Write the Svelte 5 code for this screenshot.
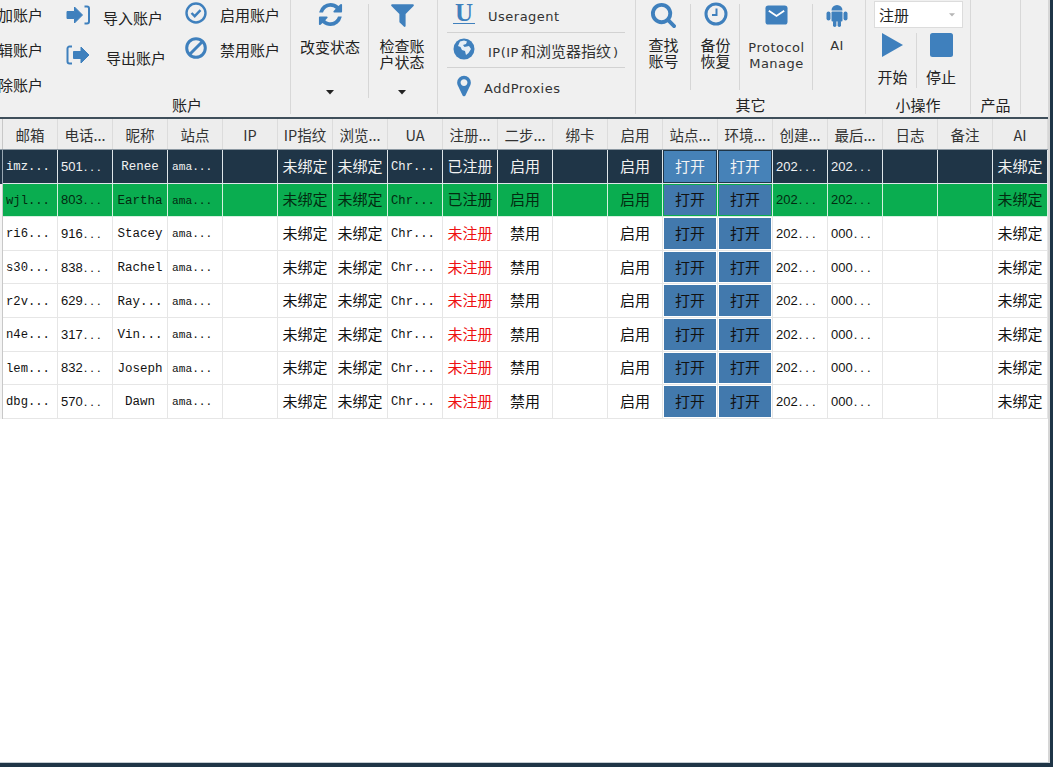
<script>
  const fa = {
    refresh: "M1639 1056q0 5-1 7-64 268-268 434.500t-478 166.500q-146 0-282.500-55t-243.500-157l-129 129q-19 19-45 19t-45-19-19-45v-448q0-26 19-45t45-19h448q26 0 45 19t19 45-19 45l-137 137q71 66 161 102t187 36q134 0 250-65t186-179q11-17 53-117 8-23 30-23h192q13 0 22.500 9.500t9.500 22.500zm25-800v448q0 26-19 45t-45 19h-448q-26 0-45-19t-19-45 19-45l138-138q-148-137-349-137-134 0-250 65t-186 179q-11 17-53 117-8 23-30 23h-199q-13 0-22.500-9.500t-9.500-22.500v-7q65-268 270-434.500t480-166.500q146 0 284 55.500t245 156.500l130-129q19-19 45-19t45 19 19 45z",
    filter: "M1595 295q17 41-14 70l-493 493v742q0 42-39 59-13 5-25 5-27 0-45-19l-256-256q-19-19-19-45v-486l-493-493q-31-29-14-70 17-39 59-39h1280q42 0 59 39z",
    search: "M1216 832q0-185-131.500-316.500t-316.500-131.500-316.500 131.500-131.500 316.500 131.500 316.500 316.500 131.500 316.500-131.500 131.500-316.500zm512 832q0 52-38 90t-90 38q-54 0-90-38l-343-342q-179 124-399 124-143 0-273.500-55.500t-225-150-150-225-55.500-273.500 55.500-273.500 150-225 225-150 273.500-55.500 273.500 55.500 225 150 150 225 55.500 273.500q0 220-124 399l343 343q37 37 37 90z",
    marker: "M1152 640q0-106-75-181t-181-75-181 75-75 181 75 181 181 75 181-75 75-181zm256 0q0 109-33 179l-364 774q-16 33-47.500 52t-67.500 19-67.500-19-46.500-52l-365-774q-33-70-33-179 0-212 150-362t362-150 362 150 150 362z"
  };

  const headers = ["邮箱","电话...","昵称","站点","IP","IP指纹","浏览...","UA","注册...","二步...","绑卡","启用","站点...","环境...","创建...","最后...","日志","备注","AI"];

  const rows = [
    { kind: "dark", email: "imz", phone: "501", name: "Renee", reg: "已注册", two: "启用", last: "202" },
    { kind: "green", email: "wjl", phone: "803", name: "Eartha", reg: "已注册", two: "启用", last: "202" },
    { kind: "", email: "ri6", phone: "916", name: "Stacey", reg: "未注册", two: "禁用", last: "000" },
    { kind: "", email: "s30", phone: "838", name: "Rachel", reg: "未注册", two: "禁用", last: "000" },
    { kind: "", email: "r2v", phone: "629", name: "Ray...", reg: "未注册", two: "禁用", last: "000" },
    { kind: "", email: "n4e", phone: "317", name: "Vin...", reg: "未注册", two: "禁用", last: "000" },
    { kind: "", email: "lem", phone: "832", name: "Joseph", reg: "未注册", two: "禁用", last: "000" },
    { kind: "", email: "dbg", phone: "570", name: "Dawn", reg: "未注册", two: "禁用", last: "000" }
  ];
</script>

{#snippet icon(name, cls)}
  <svg class={cls} viewBox="0 0 1792 1792" aria-hidden="true"><path d={fa[name]} /></svg>
{/snippet}

{#snippet caret()}
  <svg class="caret" viewBox="0 0 8 5" aria-hidden="true"><path d="M0 0h8L4 4.500z" /></svg>
{/snippet}

{#snippet num(text)}
  <span class="numtext">{text}<span class="dots">...</span></span>
{/snippet}

<div class="window">
  <div class="inner">
    <div class="toolbar">
      <section class="group acct">
        <div class="gbody acct-body">
          <div class="col1">
            <div class="cut"><span>添加账户</span></div>
            <div class="cut"><span>编辑账户</span></div>
            <div class="cut"><span>删除账户</span></div>
          </div>
          <div class="col2">
            <div class="io">
              <svg class="ioicon" viewBox="0 0 24 20" aria-hidden="true">
                <path class="fill round" d="M1 6.500h7.500V2l8 8-8 8v-4.500H1z" />
                <path class="line med" d="M18.500 1.500h2.500a2 2 0 0 1 2 2v13a2 2 0 0 1-2 2h-2.500" />
              </svg>
              <span class="io-in">导入账户</span>
            </div>
            <div class="io">
              <svg class="ioicon" viewBox="0 0 24 20" aria-hidden="true">
                <path class="line med" d="M6 1.500H3.500a2 2 0 0 0-2 2v13a2 2 0 0 0 2 2H6" />
                <path class="fill round" d="M7.500 6.500h7.500V2l8 8-8 8v-4.500H7.500z" />
              </svg>
              <span class="io-out">导出账户</span>
            </div>
          </div>
          <div class="col3">
            <div class="st">
              <svg class="sticon" viewBox="0 0 22 22" aria-hidden="true">
                <circle class="line thick" cx="11" cy="11" r="9.500" />
                <path class="line thick" d="M6.500 11l3.200 3.200 5.800-6" />
              </svg>
              <span>启用账户</span>
            </div>
            <div class="st">
              <svg class="sticon" viewBox="0 0 22 22" aria-hidden="true">
                <circle class="line bold" cx="11" cy="11" r="9.300" />
                <path class="line bold" d="M5 17L17 5" />
              </svg>
              <span>禁用账户</span>
            </div>
          </div>
        </div>
        <div class="glabel acct-label">账户</div>
      </section>

      <section class="group state">
        <div class="gbody tools">
          <div class="tool t78 sep">
            <div class="ticon">{@render icon("refresh", "fa i27")}</div>
            <div class="tlabel">改变状态</div>
            {@render caret()}
          </div>
          <div class="tool t68">
            <div class="ticon">{@render icon("filter", "fa i29")}</div>
            <div class="tlabel narrow">检查账<br />户状态</div>
            {@render caret()}
          </div>
        </div>
      </section>

      <section class="group net">
        <div class="netrow r1">
          <span class="slot s40"><span class="ulogo">U</span></span>
          <span class="latin">Useragent</span>
        </div>
        <div class="netrow r2">
          <span class="slot s40">
            <svg class="globe" viewBox="0 0 22 22" aria-hidden="true">
              <circle class="fill" cx="11" cy="11" r="10.500" />
              <path class="land" d="M7 3.500l4-1 3 1-1 2.500-3 1 1.500 2 4.500-1 2 3-2.500 4-2.500 2-1-4-3-1-1.500-3-2.500-1z" />
            </svg>
          </span>
          <span class="latin">IP(IP<span class="zh">和浏览器指纹</span>)</span>
        </div>
        <div class="netrow r3">
          <span class="slot s36">{@render icon("marker", "fa i24 pin")}</span>
          <span class="latin">AddProxies</span>
        </div>
      </section>

      <section class="group misc">
        <div class="gbody tools">
          <div class="tool t55 sep short">
            <div class="ticon">{@render icon("search", "fa i26")}</div>
            <div class="tlabel narrow tight">查找<br />账号</div>
          </div>
          <div class="tool t49 sep short">
            <div class="ticon">
              <svg class="clock" viewBox="0 0 24 24" aria-hidden="true">
                <circle class="line bold" cx="12" cy="12" r="10" />
                <path class="line med" d="M12.500 6.500V13H8" />
              </svg>
            </div>
            <div class="tlabel narrow tight">备份<br />恢复</div>
          </div>
          <div class="tool t73 sep short">
            <div class="ticon">
              <svg class="mail" viewBox="0 0 24 20" aria-hidden="true">
                <rect class="fill" x="0.500" y="0" width="23" height="20" rx="3" />
                <path class="mailflap" d="M4 5.500l8 5.500 8-5.500" />
              </svg>
            </div>
            <div class="tlabel latin proto">Protocol<br />Manage</div>
          </div>
          <div class="tool t48">
            <div class="ticon">
              <svg class="android" viewBox="0 0 22 24" aria-hidden="true">
                <path class="fill" d="M5.500 7.500a5.500 5.500 0 0 1 11 0z" />
                <rect class="fill" x="5.500" y="8.500" width="11" height="10" rx="1" />
                <rect class="fill" x="0.500" y="8.500" width="4" height="9" rx="2" />
                <rect class="fill" x="17.500" y="8.500" width="4" height="9" rx="2" />
                <rect class="fill" x="7" y="17" width="3.400" height="7" rx="1.700" />
                <rect class="fill" x="11.600" y="17" width="3.400" height="7" rx="1.700" />
              </svg>
            </div>
            <div class="tlabel latin ai">AI</div>
          </div>
        </div>
        <div class="glabel">其它</div>
      </section>

      <section class="group run">
        <div class="gbody">
          <div class="select"><span>注册</span><svg class="selcaret" viewBox="0 0 8 5" aria-hidden="true"><path d="M0 0h8L4 4.500z" /></svg></div>
          <div class="runrow">
            <div class="runcol sep2">
              <svg class="runicon" viewBox="0 0 24 24" aria-hidden="true"><path class="fill" d="M1 0l21 12L1 24z" /></svg>
              <span>开始</span>
            </div>
            <div class="runcol">
              <svg class="runicon" viewBox="0 0 24 24" aria-hidden="true"><rect class="fill" x="1" y="0" width="23" height="24" rx="2.500" /></svg>
              <span>停止</span>
            </div>
          </div>
        </div>
        <div class="glabel">小操作</div>
      </section>

      <section class="group prod">
        <div class="gbody"></div>
        <div class="glabel">产品</div>
      </section>
    </div>

    <div class="table">
      <div class="row head">
        <div class="gut"></div>
        {#each headers as h}
          <div class="hcell">{h}</div>
        {/each}
      </div>
      {#each rows as r}
        <div class="row {r.kind}">
          <div class="gut"></div>
          <div class="cell mono left">{r.email}...</div>
          <div class="cell left">{@render num(r.phone)}</div>
          <div class="cell mono center">{r.name}</div>
          <div class="cell mono left site">ama...</div>
          <div class="cell"></div>
          <div class="cell center cjk">未绑定</div>
          <div class="cell center cjk">未绑定</div>
          <div class="cell mono left">Chr...</div>
          <div class="cell center cjk" class:red={r.reg === "未注册"}>{r.reg}</div>
          <div class="cell center cjk">{r.two}</div>
          <div class="cell"></div>
          <div class="cell center cjk">启用</div>
          <div class="cell btncell"><button class="open">打开</button></div>
          <div class="cell btncell"><button class="open">打开</button></div>
          <div class="cell left">{@render num("202")}</div>
          <div class="cell left">{@render num(r.last)}</div>
          <div class="cell"></div>
          <div class="cell"></div>
          <div class="cell center cjk">未绑定</div>
        </div>
      {/each}
    </div>
  </div>
</div>

<style>
  :global(body) {
    margin: 0;
    background: #1f3547;
  }

  .window {
    width: 1053px;
    height: 767px;
    box-sizing: border-box;
    padding: 0 3px 4px 0;
    background: #1f3547;
    font-family: "Noto Sans CJK SC", "Liberation Sans", sans-serif;
    color: #222;
    font-size: 15px;
    overflow: hidden;
  }

  .inner {
    height: 100%;
    box-sizing: border-box;
    background: #fff;
    border-right: 2px solid #d6d6d6;
    border-bottom: 1px solid #c4ccd2;
    display: flex;
    flex-direction: column;
  }

  .toolbar {
    height: 117px;
    flex: none;
    display: flex;
    background: #f0f0f0;
    border-bottom: 2px solid #3f4f5b;
    overflow: hidden;
  }

  .group {
    flex: none;
    display: flex;
    flex-direction: column;
    box-sizing: border-box;
    height: 114px;
    border-right: 1px solid #d8d8d8;
  }

  .gbody {
    height: 98px;
    flex: none;
  }

  .glabel {
    text-align: center;
    line-height: 14px;
    font-size: 15px;
  }

  .acct-label {
    padding-left: 84px;
  }

  .fill,
  .fa {
    fill: #3f80bd;
  }

  .round {
    stroke: #3f80bd;
    stroke-width: 1;
    stroke-linejoin: round;
  }

  .line {
    fill: none;
    stroke: #3f80bd;
    stroke-width: 1.600;
  }

  .med {
    stroke-width: 2;
  }

  .thick {
    stroke-width: 2.400;
  }

  .bold {
    stroke-width: 3;
  }

  .acct {
    width: 291px;
  }

  .acct-body {
    display: flex;
  }

  .col1 {
    width: 43px;
    margin-right: 23px;
    margin-top: -3px;
  }

  .cut {
    height: 35px;
    display: flex;
    justify-content: flex-end;
    align-items: center;
    overflow: hidden;
    white-space: nowrap;
  }

  .cut span {
    flex: none;
  }

  .col2 {
    width: 119px;
    margin-top: -5px;
  }

  .io {
    height: 40px;
    display: flex;
    align-items: center;
    white-space: nowrap;
  }

  .ioicon {
    width: 24px;
    height: 20px;
    flex: none;
  }

  .io-in {
    margin: 4px 0 0 13px;
  }

  .io-out {
    margin: 4px 0 0 16px;
  }

  .col3 {
    margin-top: -3px;
  }

  .st {
    height: 35px;
    display: flex;
    align-items: center;
    white-space: nowrap;
  }

  .sticon {
    width: 22px;
    height: 22px;
    flex: none;
    margin-right: 13px;
    margin-top: -3px;
  }

  .state {
    width: 147px;
  }

  .tools {
    display: flex;
  }

  .tool {
    position: relative;
    box-sizing: border-box;
    height: 98px;
    flex: none;
    display: flex;
    flex-direction: column;
    align-items: center;
  }

  .sep::after {
    content: "";
    position: absolute;
    right: 0;
    top: 4px;
    bottom: 0;
    width: 1px;
    background: #d6d6d6;
  }

  .short {
    height: 90px;
  }

  .t78 { width: 78px; }
  .t68 { width: 68px; padding-right: 2px; }
  .t55 { width: 55px; }
  .t49 { width: 49px; }
  .t73 { width: 73px; }
  .t48 { width: 48px; }

  .ticon {
    height: 28px;
    display: flex;
    align-items: center;
    justify-content: center;
    flex: none;
  }

  .i27 { width: 27px; height: 27px; }
  .i29 { width: 29px; height: 29px; }
  .i26 { width: 27px; height: 27px; }
  .i24 { width: 24px; height: 24px; }

  .pin {
    margin: -5px 0 0 -1px;
  }

  .tlabel {
    margin-top: 10px;
    line-height: 17px;
    font-size: 15px;
    text-align: center;
    white-space: nowrap;
  }

  .narrow {
    line-height: 16px;
  }

  .tight {
    margin-top: 9px;
  }

  .caret {
    width: 8px;
    height: 5px;
    fill: #222;
    margin-top: auto;
    margin-bottom: 3px;
  }

  .clock {
    width: 24px;
    height: 24px;
  }

  .mail {
    width: 23px;
    height: 20px;
    margin-top: 1px;
  }

  .mailflap {
    fill: none;
    stroke: #fff;
    stroke-width: 2;
  }

  .android {
    width: 22px;
    height: 24px;
    margin-top: 2px;
  }

  .latin {
    font-family: "DejaVu Sans", "Noto Sans CJK SC", sans-serif;
    font-size: 13px;
    letter-spacing: 0.5px;
    color: #333;
    white-space: nowrap;
  }

  .zh {
    font-family: "Noto Sans CJK SC", sans-serif;
    font-size: 15px;
    letter-spacing: 0;
    margin: 0 2px;
  }

  .proto {
    line-height: 16px;
    margin-top: 12px;
  }

  .ai {
    margin-top: 9px;
    font-size: 13px;
  }

  .net {
    width: 198px;
    padding: 0 10px 0 9px;
  }

  .netrow {
    display: flex;
    align-items: center;
  }

  .r1 {
    height: 32px;
    border-bottom: 1px solid #d2d2d2;
  }

  .r2 {
    height: 34px;
    border-bottom: 1px solid #d2d2d2;
  }

  .r3 {
    height: 38px;
    padding-top: 1px;
  }

  .slot {
    display: flex;
    justify-content: flex-start;
    align-items: center;
    flex: none;
  }

  .s40 { width: 41px; padding-left: 6px; box-sizing: border-box; }
  .s36 { width: 37px; padding-left: 6px; box-sizing: border-box; }

  .ulogo {
    display: block;
    width: 22px;
    text-align: center;
    font-family: "Liberation Serif", serif;
    font-weight: 700;
    font-size: 25px;
    line-height: 21px;
    color: #3f80bd;
    border-bottom: 1px solid #3f80bd;
    margin-top: -6px;
  }

  .globe {
    width: 22px;
    height: 22px;
    margin-top: -2px;
  }

  .land {
    fill: #e6eef5;
  }

  .misc {
    width: 230px;
  }

  .run {
    width: 105px;
  }

  .select {
    box-sizing: border-box;
    width: 89px;
    height: 27px;
    margin: 1px 0 0 8px;
    background: #fff;
    border: 1px solid #dcdcdc;
    display: flex;
    align-items: center;
    justify-content: space-between;
    padding: 0 7px 0 4px;
    font-size: 15px;
  }

  .selcaret {
    width: 6px;
    height: 4px;
    fill: #b5b5b5;
  }

  .runrow {
    display: flex;
    margin: 5px 0 0 3px;
  }

  .runcol {
    box-sizing: border-box;
    width: 48px;
    height: 55px;
    display: flex;
    flex-direction: column;
    align-items: center;
    white-space: nowrap;
  }

  .sep2 {
    border-right: 1px solid #d8d8d8;
  }

  .runicon {
    width: 24px;
    height: 24px;
    flex: none;
    margin-bottom: 10px;
  }

  .runcol span {
    line-height: 20px;
  }

  .prod {
    width: 50px;
  }

  .table {
    display: flex;
    flex-direction: column;
  }

  .row {
    display: grid;
    grid-template-columns: 3px repeat(19, 55px);
    height: 33.600px;
    background: #fff;
  }

  .head {
    height: 31px;
    background: #ededed;
    border-bottom: 1px solid #8c98a2;
    box-sizing: border-box;
  }

  .gut {
    border-right: 1px solid #c8c8c8;
    box-sizing: border-box;
    background: #f4f4f4;
  }

  .head .gut {
    background: #ededed;
  }

  .dark .gut {
    background: #1f3547;
    border-right-color: #9aa8b3;
  }

  .hcell {
    box-sizing: border-box;
    border-right: 1px solid #dcdcdc;
    display: flex;
    align-items: center;
    justify-content: center;
    font-size: 14.500px;
    color: #333;
    white-space: nowrap;
  }

  .cell {
    box-sizing: border-box;
    border-right: 1px solid #e6e6e6;
    border-bottom: 1px solid #e6e6e6;
    display: flex;
    align-items: center;
    white-space: nowrap;
    overflow: hidden;
    min-width: 0;
    color: #111;
  }

  .dark .cell {
    background: #1f3547;
    color: #f2f2f2;
    border-color: #dfe6ea;
  }

  .green .cell {
    background: #0aad50;
    color: #032a10;
    border-color: #d5f1e0;
  }

  .left {
    padding-left: 3px;
  }

  .center {
    justify-content: center;
  }

  .mono {
    font-family: "Liberation Mono", monospace;
    font-size: 12.500px;
    padding-top: 2px;
  }

  .mono.left {
    font-size: 12.200px;
  }

  .mono.site {
    padding-left: 4px;
    font-size: 11.200px;
  }

  .cjk {
    font-size: 15px;
    padding-bottom: 2px;
  }

  .numtext {
    font-family: "Liberation Sans", sans-serif;
    font-size: 13px;
  }

  .dots {
    letter-spacing: 3px;
    margin-left: 1px;
  }

  .cell.red {
    color: #ee1111;
  }

  .btncell {
    padding: 1px;
  }

  .open {
    width: 100%;
    height: 100%;
    padding: 0 0 2px;
    border: 0;
    background: #4279ad;
    color: #111;
    font: inherit;
    font-size: 15px;
    display: block;
  }

  .dark .open {
    color: #f4f4f4;
    background: #4682b8;
  }
</style>
